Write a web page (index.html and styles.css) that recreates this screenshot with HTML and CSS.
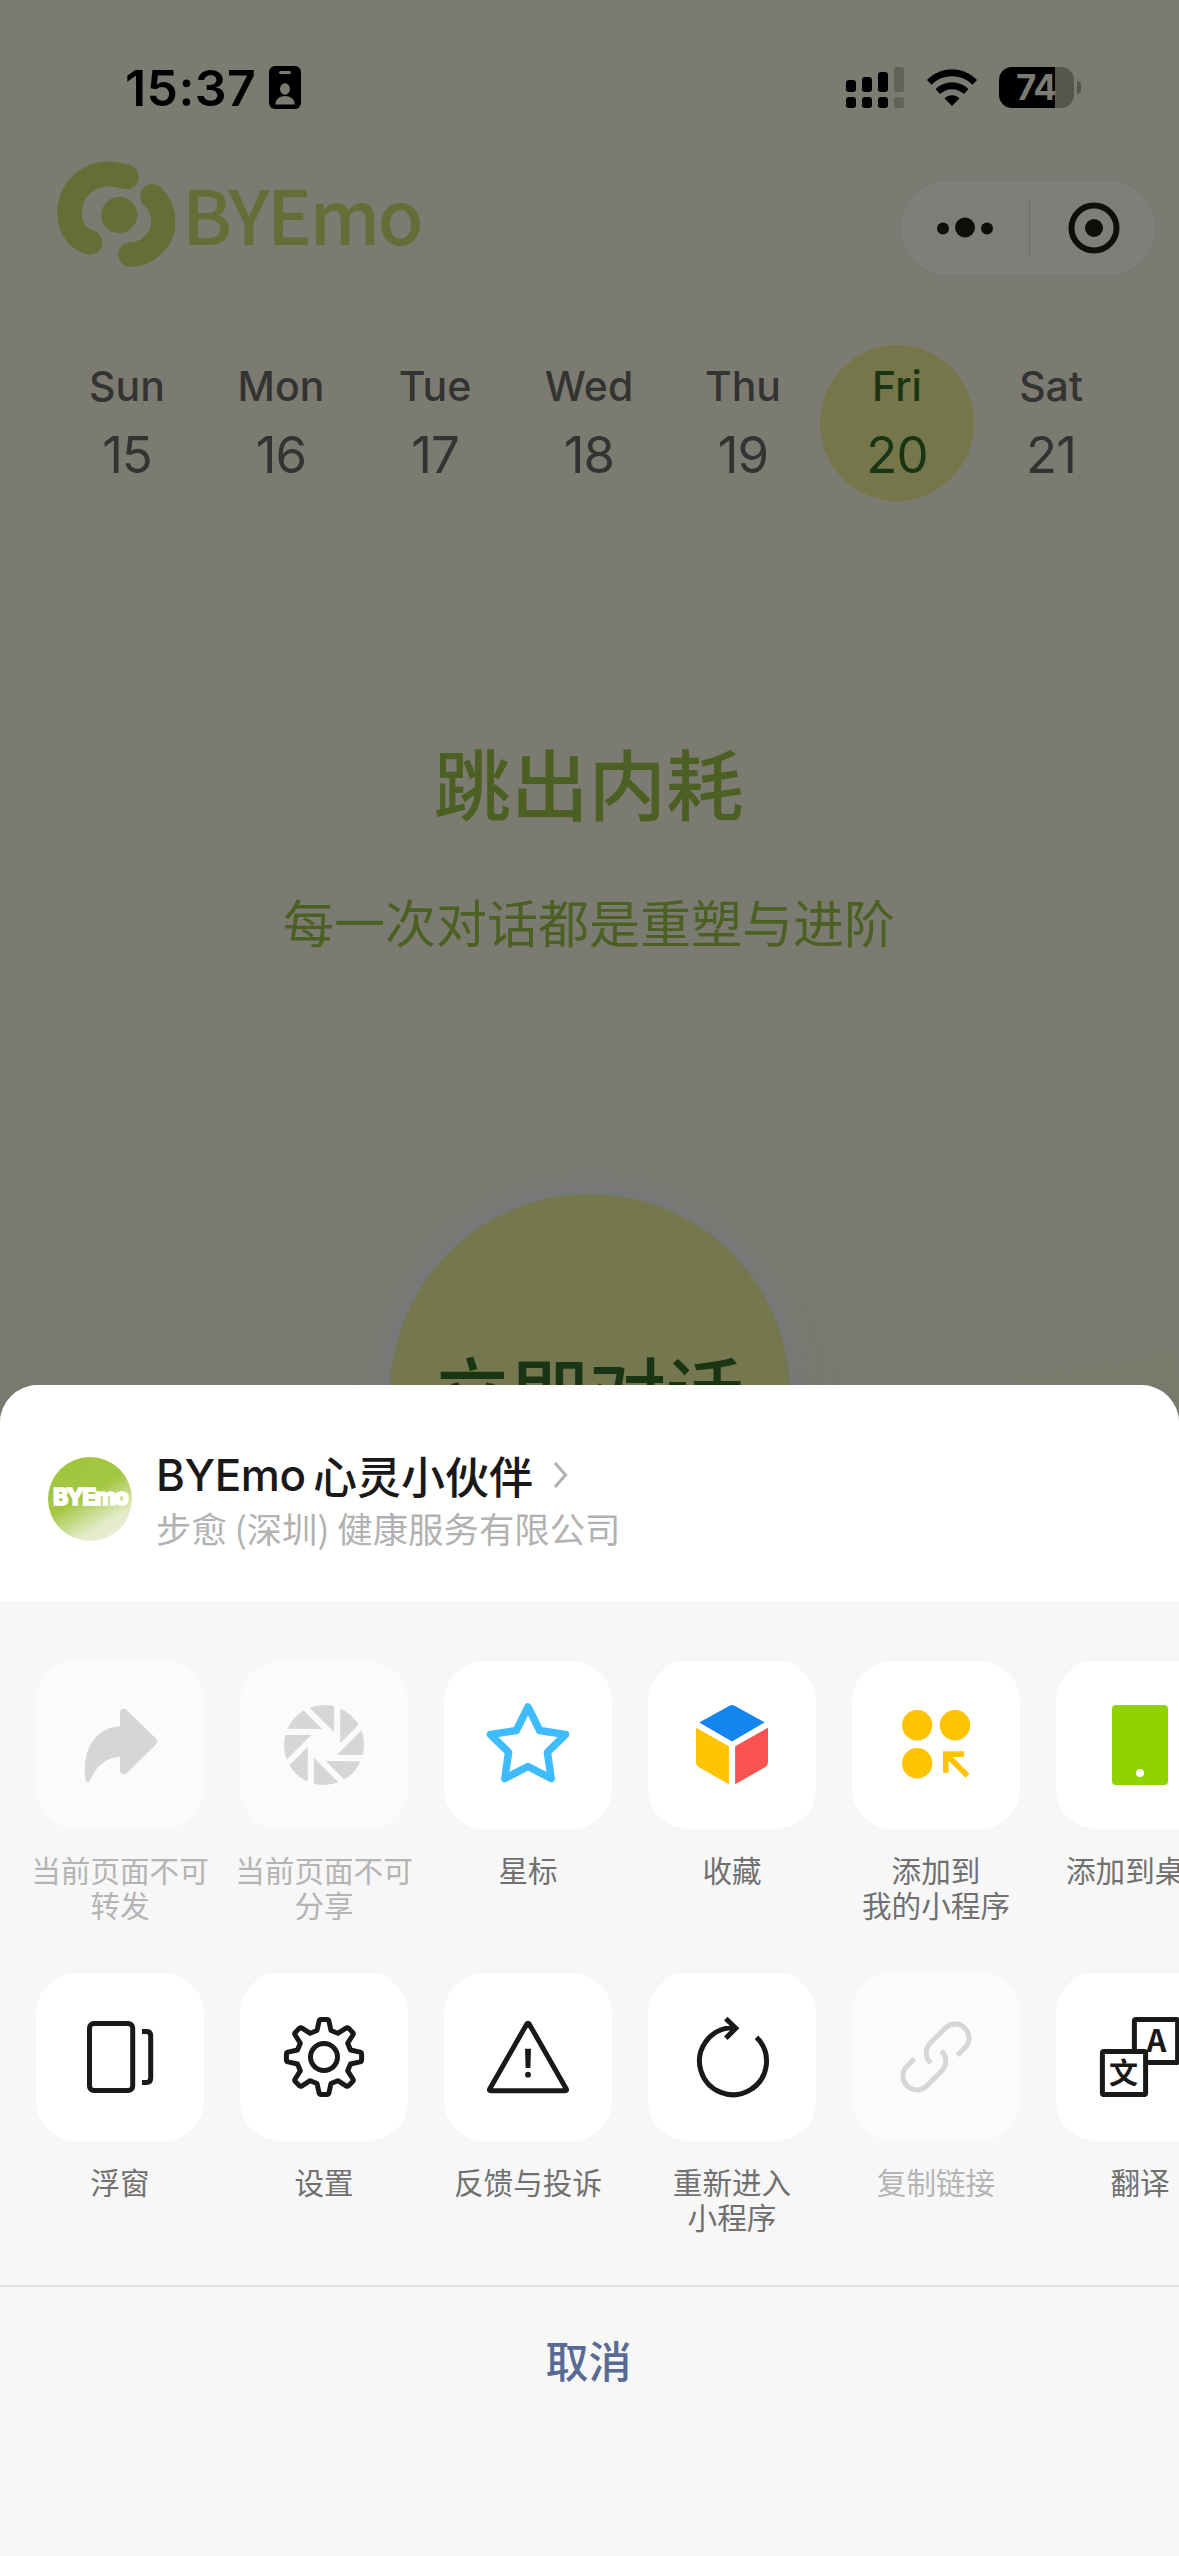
FILE: index.html
```html
<!DOCTYPE html>
<html lang="zh-CN">
<head>
<meta charset="utf-8">
<title>BYEmo</title>
<link rel="stylesheet" href="styles.css">
</head>
<body>
<div class="phone">
  <main class="home">
    <div class="status">
      <div class="status-left">
        <span class="time">15:37</span>
        <svg width="32" height="43" viewBox="0 0 32 43"><rect width="32" height="43" rx="6"/><rect class="cut" x="10" y="5" width="12" height="3" rx="1.5"/><ellipse class="cut" cx="16" cy="23" rx="5" ry="5.8"/><path class="cut" d="M6.500 38.500C6 33 11 30 16 30s10 3 9.500 8.500z"/></svg>
      </div>
      <div class="status-right">
        <svg class="signal" width="58" height="41" viewBox="0 0 58 41"><rect y="13" width="10" height="12" rx="3"/><rect x="16" y="10" width="10" height="15" rx="3"/><rect x="32" y="5" width="10" height="20" rx="3"/><rect class="dim" x="48" width="10" height="25" rx="3"/><rect y="30" width="10" height="11" rx="3"/><rect x="16" y="30" width="10" height="11" rx="3"/><rect x="32" y="30" width="10" height="11" rx="3"/><rect class="dim" x="48" y="30" width="10" height="11" rx="3"/></svg>
        <svg class="wifi" width="50" height="37" viewBox="0 0 50 37"><path d="M0 11C14-3.500 36-3.500 50 11l-4.500 4.800C34 4.500 16 4.500 4.500 15.800zM8.500 20c9.500-9 23.500-9 33 0L37 25c-7-6.500-17-6.500-24 0zM17.500 29.200c4.500-4 10.500-4 15 0L25 37z"/></svg>
        <div class="battery"><span>74</span></div>
        <i class="battery-nub"></i>
      </div>
    </div>
    <header class="nav">
      <div class="brand">
        <svg width="118" height="106" viewBox="0 0 118 106"><g fill="none" stroke="#646e36" stroke-linecap="round"><path d="M69.500 16C36 5 12.500 26 12.500 52c0 16 9 26 20.500 29.500" stroke-width="24.600"/><path d="M95.500 35.500C109 48 110 70 98 82c-7 8-15 11.500-24.500 11.500" stroke-width="24.400"/></g><circle cx="62.300" cy="54" r="18" fill="#646e36"/></svg>
        <span class="brand-name">BYEmo</span>
      </div>
      <div class="capsule">
        <svg width="257" height="95" viewBox="0 0 257 95"><circle cx="43" cy="47.500" r="6"/><circle cx="65" cy="46.500" r="10"/><circle cx="87" cy="47.500" r="6"/><path d="M129.500 17.500v60" stroke="#70706b" stroke-width="1"/><circle cx="194" cy="47" r="22.500" fill="none" stroke="#0e0e0b" stroke-width="6"/><circle cx="194" cy="47" r="9"/></svg>
      </div>
    </header>
    <div class="week">
      <div class="day"><b>Sun</b><span>15</span></div>
      <div class="day"><b>Mon</b><span>16</span></div>
      <div class="day"><b>Tue</b><span>17</span></div>
      <div class="day"><b>Wed</b><span>18</span></div>
      <div class="day"><b>Thu</b><span>19</span></div>
      <div class="day today"><b>Fri</b><span>20</span></div>
      <div class="day"><b>Sat</b><span>21</span></div>
    </div>
    <section class="hero">
      <h1>跳出内耗</h1>
      <p>每一次对话都是重塑与进阶</p>
      <div class="talk">立即对话</div>
    </section>
  </main>

  <section class="sheet">
    <header class="profile">
      <div class="avatar"><span>BYEmo</span></div>
      <div class="profile-text">
        <div class="profile-name"><span class="latin">BYEmo</span><span>心灵小伙伴</span>
          <svg width="16" height="28" viewBox="0 0 16 28"><path d="M2 2l10.500 12L2 26" fill="none" stroke="#b2b2b2" stroke-width="3.200"/></svg>
        </div>
        <div class="company">步愈 (深圳) 健康服务有限公司</div>
      </div>
    </header>

    <div class="actions">
      <div class="row">
        <div class="action off">
          <svg class="tile" viewBox="0 0 168 168"><path fill="#d6d6d6" d="M84 65.300V52c0-4.500 4-5.500 7-2.500L120 77.500c2 2 2 4 0 6L91 111.700c-3 2.800-7 1.500-7-2.700V95.700C70 96.500 60 105 54.500 118.500c-1.500 3.500-4.500 3.500-5 0C45.500 91 58 67 84 65.300z"/></svg>
          <span>当前页面不可<br>转发</span>
        </div>
        <div class="action off">
          <svg class="tile" viewBox="0 0 168 168"><defs><path id="blade" d="M69.600 46.700A40 40 0 0 1 94.100 45.300V71.300z"/></defs><g fill="#d6d6d6"><use href="#blade"/><use href="#blade" transform="rotate(45 84 84)"/><use href="#blade" transform="rotate(90 84 84)"/><use href="#blade" transform="rotate(135 84 84)"/><use href="#blade" transform="rotate(180 84 84)"/><use href="#blade" transform="rotate(225 84 84)"/><use href="#blade" transform="rotate(270 84 84)"/><use href="#blade" transform="rotate(315 84 84)"/></g></svg>
          <span>当前页面不可<br>分享</span>
        </div>
        <div class="action">
          <svg class="tile" viewBox="0 0 168 168"><path fill="none" stroke="#3fbbff" stroke-width="7.500" stroke-linejoin="round" d="M84 46L95.700 69.500 121.500 73.500 103.400 91.300 107.200 117.500 84 105.500 60.800 117.500 64.600 91.300 46.500 73.500 72.300 69.500z"/></svg>
          <span>星标</span>
        </div>
        <div class="action">
          <svg class="tile" viewBox="0 0 168 168"><path fill="#1485ee" d="M51.200 61.400L81.500 44.800q2.500-1.400 5 0L116.800 61.400 84 80.400z"/><path fill="#ffc300" d="M48 66.700L80.900 85.300v38L50.500 106q-2.500-1.500-2.500-5z"/><path fill="#fa5151" d="M120 66.700L87.100 85.300v38L117.500 106q2.500-1.500 2.500-5z"/></svg>
          <span>收藏</span>
        </div>
        <div class="action">
          <svg class="tile" viewBox="0 0 168 168"><g fill="#ffc300"><circle cx="65.200" cy="64.300" r="15.200"/><circle cx="103" cy="64.300" r="15.200"/><circle cx="65.200" cy="102.300" r="15.200"/></g><path fill="none" stroke="#ffc300" stroke-width="5.600" d="M112 93.100H93.800v18.700M94.500 93.800L115.500 114.800"/></svg>
          <span>添加到<br>我的小程序</span>
        </div>
        <div class="action">
          <svg class="tile" viewBox="0 0 168 168"><rect x="56" y="44" width="56" height="80" rx="4" fill="#91d300"/><circle cx="84" cy="112" r="4" fill="#fff"/></svg>
          <span>添加到桌面</span>
        </div>
      </div>
      <div class="row">
        <div class="action">
          <svg class="tile line" viewBox="0 0 168 168"><rect x="53.500" y="50.500" width="43.200" height="67" rx="4.500"/><path d="M106 58.500h4.500q4.200 0 4.200 4.500v42q0 4.500-4.200 4.500H106"/></svg>
          <span>浮窗</span>
        </div>
        <div class="action">
          <svg class="tile line" viewBox="0 0 168 168"><g transform="translate(84 84)"><path stroke-linejoin="round" d="M-7-26.500L-4.900-36Q-4.500-37.600-3-37.600H3Q4.500-37.600 4.900-36L7-26.500 13.800-23.700 22-28.900Q23.400-29.800 24.600-28.700L28.700-24.600Q29.800-23.400 28.900-22L23.700-13.800 26.500-7 36-4.900Q37.600-4.500 37.600-3V3Q37.600 4.500 36 4.900L26.500 7 23.700 13.800 28.900 22Q29.800 23.400 28.700 24.600L24.600 28.700Q23.400 29.800 22 28.900L13.800 23.700 7 26.500 4.900 36Q4.500 37.600 3 37.600H-3Q-4.500 37.600-4.900 36L-7 26.500-13.800 23.700-22 28.900Q-23.400 29.800-24.600 28.700L-28.700 24.600Q-29.800 23.400-28.900 22L-23.700 13.800-26.500 7-36 4.900Q-37.600 4.500-37.600 3V-3Q-37.600-4.500-36-4.900L-26.500-7-23.700-13.800-28.900-22Q-29.800-23.400-28.700-24.600L-24.600-28.700Q-23.400-29.800-22-28.900L-13.800-23.700z"/><circle r="13.500"/></g></svg>
          <span>设置</span>
        </div>
        <div class="action">
          <svg class="tile line" viewBox="0 0 168 168"><path stroke-linejoin="round" d="M82.700 51.200q1.300-2 2.600 0L122.300 116q.8 1.800-1.300 1.800H47q-2.100 0-1.300-1.800z"/><path fill="#191919" stroke="none" d="M81 75.700h6l-.6 19.300h-4.800z"/><circle cx="84" cy="101.700" r="2.900" fill="#191919" stroke="none"/></svg>
          <span>反馈与投诉</span>
        </div>
        <div class="action">
          <svg class="tile line" viewBox="0 0 168 168"><path d="M108.500 64.300A33.500 33.500 0 1 1 84 54.700H87M77.800 45.500L87.800 55.300 77.800 65.100"/></svg>
          <span>重新进入<br>小程序</span>
        </div>
        <div class="action off">
          <svg class="tile" viewBox="0 0 168 168"><g fill="none" stroke="#d6d6d6" stroke-width="5"><path id="hook" d="M105.500 82.300L113.200 74.600A13.900 13.900 0 0 0 93.600 54.900L78.400 70.100A13.900 13.900 0 0 0 78.800 90.200"/><use href="#hook" transform="rotate(180 84 84)"/></g></svg>
          <span>复制链接</span>
        </div>
        <div class="action">
          <svg class="tile line" viewBox="0 0 168 168"><rect x="78.400" y="46.400" width="43.200" height="43.200" rx="1.500"/><text x="100.500" y="78.500" class="glyph" font-size="31">A</text><rect x="46.400" y="78.400" width="43.200" height="43.200" rx="1.500" fill="#fff"/><text x="67.500" y="111" class="glyph" font-size="29">文</text></svg>
          <span>翻译</span>
        </div>
      </div>
    </div>
    <div class="cancel">取消</div>
  </section>
</div>
</body>
</html>
```
FILE: styles.css
```css
* { box-sizing: border-box; }

body {
  margin: 0;
  font-family: "Inter", "Noto Sans CJK SC", sans-serif;
}

svg { display: block; flex: none; }

.phone {
  display: flex;
  flex-direction: column;
  width: 1179px;
  height: 2556px;
  overflow: hidden;
}

/* Dimmed page behind the sheet */
.home {
  flex: none;
  height: 1425px;
  overflow: hidden;
  background: linear-gradient(170deg, #7b7b71 0%, #7c7b72 60%, #79796c 100%);
}

.status {
  display: flex;
  justify-content: space-between;
  align-items: center;
  height: 160px;
  padding: 15px 98px 0 125px;
}

.status-left, .status-right { display: flex; align-items: center; }

.time {
  width: 144px;
  font-size: 50px;
  font-weight: 600;
  line-height: 60px;
  letter-spacing: 0.4px;
}

.cut { fill: #7b7b71; }
.dim { fill: #62625b; }
.wifi { margin: 0 22px 0 23px; }

.battery {
  display: flex;
  align-items: center;
  justify-content: flex-end;
  width: 75px;
  height: 41px;
  padding-right: 18px;
  border-radius: 13px;
  background: linear-gradient(90deg, #000 56px, #56564f 56px);
  color: #7b7b71;
  font-size: 35px;
  font-weight: 700;
  line-height: 41px;
  letter-spacing: -1px;
}

.battery-nub {
  width: 4px;
  height: 13px;
  margin-left: 3px;
  border-radius: 0 4px 4px 0;
  background: #56564f;
}

.nav {
  display: flex;
  justify-content: space-between;
  align-items: flex-start;
  height: 185px;
  padding: 1px 22px 0 57px;
}

.brand { display: flex; }

.brand-name {
  margin: 2px 0 0 7px;
  color: #646e36;
  font-family: "Noto Sans CJK SC", sans-serif;
  font-size: 75px;
  font-weight: 500;
  line-height: 100px;
  letter-spacing: -2.6px;
}

.capsule {
  width: 258px;
  height: 96px;
  margin-top: 19px;
  border: 1px solid #777771;
  border-radius: 48px;
  background: #7e7e7a;
  fill: #0e0e0b;
}

.week {
  display: grid;
  grid-template-columns: repeat(7, 154px);
  padding-left: 50px;
}

.day {
  display: flex;
  flex-direction: column;
  align-items: center;
  gap: 13px;
  height: 156px;
  padding-top: 16px;
  border-radius: 50%;
  color: #333332;
}

.day b { font-size: 41px; font-weight: 500; line-height: 50px; }
.day span { font-size: 51px; line-height: 61px; letter-spacing: -1px; }
.today { background: #75774a; color: #1a3513; }

.hero {
  display: flex;
  flex-direction: column;
  align-items: center;
  padding-top: 230px;
  font-family: "Noto Sans CJK SC", sans-serif;
  color: #4d6023;
}

.hero h1 { margin: 0 2px 0 0; font-size: 77.5px; font-weight: 500; line-height: 100px; }
.hero p { margin: 60px 1px 243px 0; font-size: 51px; line-height: 60px; }

.talk {
  width: 400px;
  height: 400px;
  padding-right: 2px;
  border-radius: 50%;
  background: #75774f;
  box-shadow: 0 0 40px 2px #737984;
  color: #1a3513;
  font-size: 77.5px;
  font-weight: 500;
  line-height: 391px;
  text-align: center;
}

/* Bottom sheet */
.sheet {
  position: relative;
  flex: 1;
  margin-top: -40px;
  border-radius: 38px 38px 0 0;
  background: #f7f7f7;
  overflow: hidden;
}

.profile {
  display: flex;
  height: 216px;
  padding: 72px 48px 0;
  background: #fff;
}

.avatar {
  display: flex;
  align-items: center;
  justify-content: center;
  width: 84px;
  height: 84px;
  padding-bottom: 4px;
  border-radius: 50%;
  background: linear-gradient(150deg, #9fc43a 0%, #a4c742 45%, #e3ebc9 75%, #ebefdc 100%);
  color: #fff;
  font-size: 23px;
  font-weight: 800;
  letter-spacing: -1.6px;
  -webkit-text-stroke: 1.5px #fff;
}

.profile-text { margin: -7px 0 0 24px; }

.profile-name {
  display: flex;
  align-items: center;
  height: 50px;
  color: #191919;
  font-size: 44px;
  font-weight: 500;
  line-height: 50px;
}

.profile-name .latin { width: 157px; letter-spacing: -0.4px; }
.profile-name span + span { font-family: "Noto Sans CJK SC", sans-serif; }
.profile-name svg { margin-left: 20px; }

.company {
  margin-top: 6px;
  color: #b2b2b2;
  font-family: "Noto Sans CJK SC", sans-serif;
  font-size: 35.4px;
  line-height: 44px;
}

.actions {
  height: 684px;
  padding: 60px 0 0 18px;
  overflow: hidden;
}

.row {
  display: grid;
  grid-template-columns: repeat(6, 204px);
  height: 312px;
}

.action {
  display: flex;
  flex-direction: column;
  align-items: center;
  gap: 23px;
  color: #707070;
  font-family: "Noto Sans CJK SC", sans-serif;
  font-size: 29.6px;
  line-height: 35px;
  text-align: center;
  white-space: nowrap;
}

.tile {
  width: 168px;
  height: 168px;
  border-radius: 40px;
  background: #fff;
}

.off { color: #b4b4b4; }
.off .tile { background: #fbfbfb; }
.line { fill: none; stroke: #191919; stroke-width: 5; }

.glyph {
  fill: #191919;
  stroke: none;
  font-family: "Noto Sans CJK SC", sans-serif;
  font-weight: 700;
  text-anchor: middle;
}

.cancel {
  padding: 42px 2px 0 0;
  border-top: 2px solid #dedede;
  color: #576b95;
  font-family: "Noto Sans CJK SC", sans-serif;
  font-size: 43px;
  font-weight: 500;
  line-height: 60px;
  text-align: center;
}
```
